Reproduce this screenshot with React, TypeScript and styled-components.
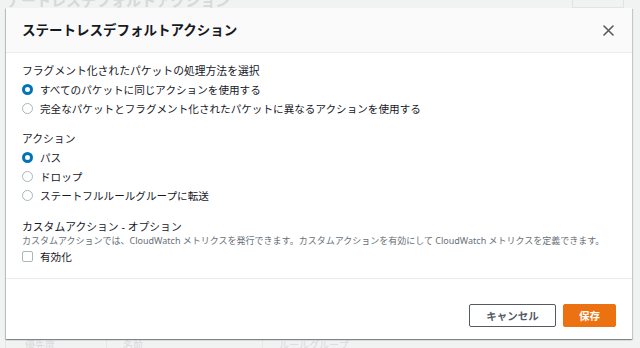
import React, { useState } from 'react';
import styled, { createGlobalStyle } from 'styled-components';

const GlobalStyle = createGlobalStyle`
  html, body {
    margin: 0;
    padding: 0;
    width: 640px;
    height: 348px;
    overflow: hidden;
    background: #f1f2f2;
    font-family: "Noto Sans", "Noto Sans CJK JP", sans-serif;
    color: #16191f;
  }
  * { box-sizing: border-box; }
`;

const Page = styled.div`
  position: relative;
  width: 640px;
  height: 348px;
  overflow: hidden;
`;

const Backdrop = styled.div`
  display: flex;
  flex-direction: column;
  height: 100%;
  padding: 0 0 0 5px;
  color: #d6d9d9;
`;

const BackTop = styled.div`
  display: flex;
  justify-content: space-between;
  align-items: flex-end;
  height: 8px;
  overflow: hidden;
`;

const BackHeading = styled.div`
  font-size: 15px;
  font-weight: 700;
  line-height: 18px;
  margin-left: -14px;
  margin-bottom: -1px;
`;

const BackButton = styled.div`
  width: 52px;
  height: 16px;
  margin-right: 16px;
  border: 1px solid #e2e4e4;
  border-top: none;
  font-size: 10px;
  font-weight: 700;
  display: flex;
  justify-content: center;
  align-items: flex-end;
  padding-bottom: 8px;
`;

const BackPanel = styled.div`
  flex: 1;
  border-left: 1px solid #e4e6e6;
`;

const BackColumns = styled.div`
  position: absolute;
  left: 0;
  right: 0;
  bottom: -4px;
  display: flex;
  font-size: 10px;
  color: #d8dbdb;
  padding-left: 25px;
  gap: 16px;
`;

const BackCol = styled.span<{ $w: number }>`
  width: ${p => p.$w}px;
  border-right: 1px solid #e6e8e8;
`;

const Modal = styled.div`
  position: absolute;
  top: 8px;
  left: 6px;
  width: 626px;
  height: 331px;
  background: #ffffff;
  display: flex;
  flex-direction: column;
  box-shadow: 0 1px 1px 0 rgba(0, 28, 36, 0.3), 1px 1px 1px 0 rgba(0, 28, 36, 0.15),
    -1px 1px 1px 0 rgba(0, 28, 36, 0.15);
`;

const Header = styled.div`
  height: 45px;
  flex-shrink: 0;
  background: #fafafa;
  border-bottom: 1px solid #eaeded;
  display: flex;
  align-items: center;
  justify-content: space-between;
  padding: 0 18px 0 16px;
`;

const Title = styled.h2`
  margin: 0;
  font-size: 13.5px;
  font-weight: 700;
  color: #16191f;
  line-height: 18px;
`;

const CloseButton = styled.button`
  border: none;
  background: none;
  padding: 0;
  width: 12px;
  height: 12px;
  display: flex;
  align-items: center;
  justify-content: center;
  cursor: pointer;
  color: #545b64;
`;

const Body = styled.div`
  flex: 1;
  padding: 9px 16px 0;
  display: flex;
  flex-direction: column;
`;

const Section = styled.div<{ $gap?: number }>`
  display: flex;
  flex-direction: column;
  margin-bottom: ${p => p.$gap ?? 0}px;
`;

const Label = styled.div<{ $lh?: number }>`
  font-size: 10.8px;
  line-height: ${p => p.$lh ?? 18}px;
  color: #16191f;
  white-space: nowrap;
`;

const Description = styled.div`
  font-size: 9px;
  line-height: 12px;
  color: #687078;
  white-space: nowrap;
`;

const OptionRow = styled.label`
  display: flex;
  align-items: center;
  height: 19px;
  gap: 7px;
  font-size: 10.6px;
  color: #16191f;
  white-space: nowrap;
  cursor: pointer;
`;

const RadioDot = styled.span<{ $checked: boolean }>`
  width: 11px;
  height: 11px;
  border-radius: 50%;
  flex-shrink: 0;
  background: #fff;
  border: ${p => (p.$checked ? '3px solid #0073bb' : '1px solid #aab7b8')};
`;

const CheckBox = styled.span`
  width: 11px;
  height: 11px;
  border-radius: 2px;
  flex-shrink: 0;
  border: 1px solid #aab7b8;
  background: #fff;
`;

const Footer = styled.div`
  height: 61px;
  flex-shrink: 0;
  border-top: 1px solid #eaeded;
  display: flex;
  justify-content: flex-end;
  align-items: flex-end;
  gap: 7px;
  padding: 0 16px 12px;
`;

const Button = styled.button<{ $primary?: boolean }>`
  height: 23px;
  padding: 0;
  border-radius: 2px;
  font-family: "Noto Sans", "Noto Sans CJK JP", sans-serif;
  font-size: 10.5px;
  font-weight: 700;
  white-space: nowrap;
  cursor: pointer;
  display: flex;
  align-items: center;
  justify-content: center;
  ${p =>
    p.$primary
      ? `background: #ec7211; border: 1px solid #ec7211; color: #ffffff; width: 53px;`
      : `background: #ffffff; border: 1px solid #545b64; color: #545b64; width: 87px;`}
`;

const fragmentOptions = [
  'すべてのパケットに同じアクションを使用する',
  '完全なパケットとフラグメント化されたパケットに異なるアクションを使用する',
];

const actionOptions = ['パス', 'ドロップ', 'ステートフルルールグループに転送'];

export default function App() {
  const [fragment, setFragment] = useState(0);
  const [action, setAction] = useState(0);

  return (
    <Page>
      <GlobalStyle />
      <Backdrop>
        <BackTop>
          <BackHeading>ステートレスデフォルトアクション</BackHeading>
          <BackButton>編集</BackButton>
        </BackTop>
        <BackPanel />
      </Backdrop>
      <BackColumns>
        <BackCol $w={82}>優先度</BackCol>
        <BackCol $w={140}>名前</BackCol>
        <span>ルールグループ</span>
      </BackColumns>

      <Modal>
        <Header>
          <Title>ステートレスデフォルトアクション</Title>
          <CloseButton aria-label="閉じる">
            <svg width="11" height="11" viewBox="0 0 11 11">
              <path d="M1 1L10 10M10 1L1 10" stroke="currentColor" strokeWidth="1.6" strokeLinecap="round" />
            </svg>
          </CloseButton>
        </Header>
        <Body>
          <Section $gap={12}>
            <Label>フラグメント化されたパケットの処理方法を選択</Label>
            {fragmentOptions.map((text, i) => (
              <OptionRow key={text} onClick={() => setFragment(i)}>
                <RadioDot $checked={fragment === i} />
                {text}
              </OptionRow>
            ))}
          </Section>
          <Section $gap={14}>
            <Label>アクション</Label>
            {actionOptions.map((text, i) => (
              <OptionRow key={text} onClick={() => setAction(i)}>
                <RadioDot $checked={action === i} />
                {text}
              </OptionRow>
            ))}
          </Section>
          <Section>
            <Label $lh={16}>カスタムアクション - オプション</Label>
            <Description>
              カスタムアクションでは、CloudWatch メトリクスを発行できます。カスタムアクションを有効にして CloudWatch メトリクスを定義できます。
            </Description>
            <OptionRow>
              <CheckBox />
              有効化
            </OptionRow>
          </Section>
        </Body>
        <Footer>
          <Button>キャンセル</Button>
          <Button $primary>保存</Button>
        </Footer>
      </Modal>
    </Page>
  );
}
